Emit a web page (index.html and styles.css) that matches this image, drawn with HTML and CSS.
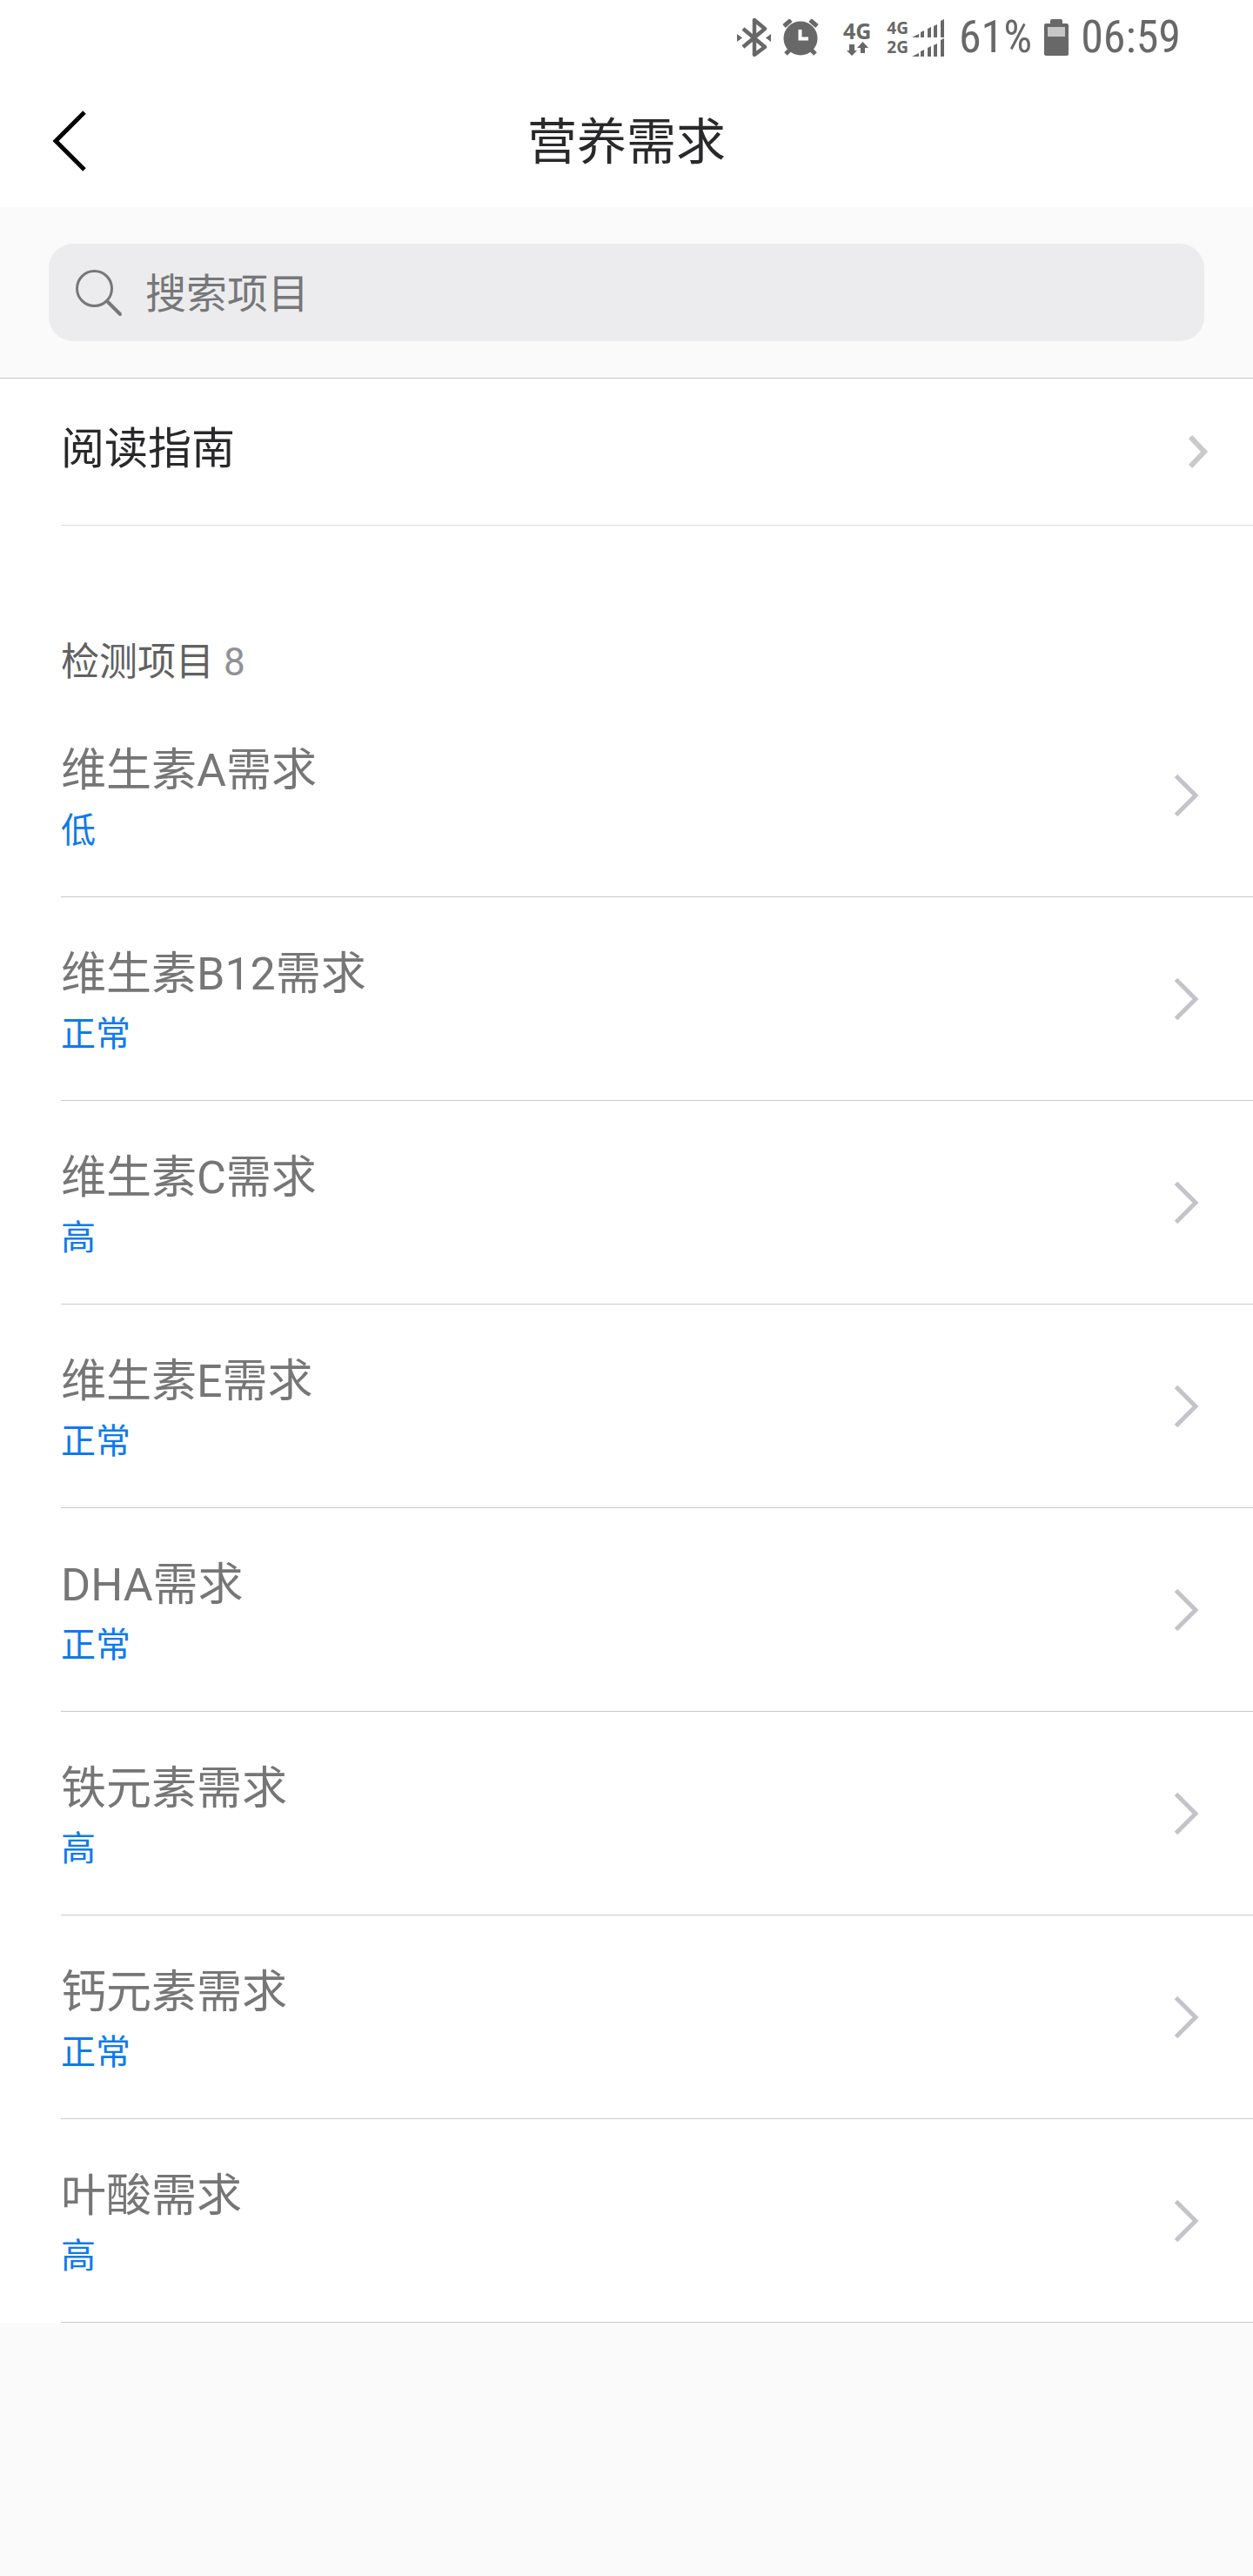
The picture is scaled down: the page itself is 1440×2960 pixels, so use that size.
FILE: index.html
```html
<!DOCTYPE html>
<html lang="zh-CN">
<head>
  <meta charset="UTF-8">
  <meta name="viewport" content="width=device-width, initial-scale=1.0">
  <title>营养需求</title>
  <link rel="stylesheet" href="styles.css">
</head>
<body>
  <!-- Shared icons -->
  <svg class="sprite" aria-hidden="true">
    <symbol id="chevron" viewBox="0 0 30 50">
      <path d="M2.500 2.500L25 25L2.500 47.500" fill="none" stroke="currentColor" stroke-width="5"/>
    </symbol>
    <symbol id="signal" viewBox="0 0 38 21">
      <path d="M0 21L8 17V21ZM10 21V15L14 13V21ZM18 21V11L22 9V21ZM25 21V8L29 6V21ZM33 21V2L37 0V21Z" fill="currentColor"/>
    </symbol>
  </svg>

  <!-- Status bar -->
  <div class="status-bar">
    <svg class="bluetooth" viewBox="0 0 40 44">
      <path d="M7 12L32 33L20 42V2L32 12L7 33" fill="none" stroke="currentColor" stroke-width="4.500" stroke-linejoin="round"/>
      <path d="M0 18L6 22.500L0 27ZM39 18L33 22.500L39 27Z" fill="currentColor"/>
    </svg>
    <svg class="alarm" viewBox="0 0 42 42">
      <circle cx="21" cy="22" r="19.500" fill="currentColor"/>
      <path d="M2 8L10 1M40 8L32 1M4 40L9 35M38 40L33 35" stroke="currentColor" stroke-width="5"/>
      <path d="M20.500 12V22.500H30" fill="none" stroke="#fff" stroke-width="4"/>
    </svg>
    <div class="network">
      <span>4G</span>
      <svg class="arrows" viewBox="0 0 26 16">
        <path d="M4 3H10V10H13L7 16L1 10H4ZM17 13V7H13L19.500 0L26 7H22V13Z" fill="currentColor"/>
      </svg>
    </div>
    <div class="sims">
      <div class="sim"><span>4G</span><svg class="signal"><use href="#signal"/></svg></div>
      <div class="sim"><span>2G</span><svg class="signal"><use href="#signal"/></svg></div>
    </div>
    <span class="percent">61%</span>
    <svg class="battery" viewBox="0 0 28 42">
      <path d="M7 5V2Q7 0 9 0H19Q21 0 21 2V5H26Q28 5 28 7V40Q28 42 26 42H2Q0 42 0 40V7Q0 5 2 5Z" fill="currentColor"/>
      <rect x="4" y="9" width="20" height="11" fill="#c6c6c6"/>
    </svg>
    <span class="clock">06:59</span>
  </div>

  <header class="header">
    <button type="button" class="back-button" aria-label="返回">
      <svg viewBox="0 0 40 72">
        <path d="M37 3L4 36L37 69" fill="none" stroke="currentColor" stroke-width="5"/>
      </svg>
    </button>
    <h1>营养需求</h1>
  </header>

  <form class="search">
    <label class="search-box">
      <svg viewBox="0 0 54 54">
        <circle cx="21.500" cy="21.500" r="20" fill="none" stroke="currentColor" stroke-width="3"/>
        <path d="M36 36L51 51" stroke="currentColor" stroke-width="4" stroke-linecap="round"/>
      </svg>
      <input type="search" placeholder="搜索项目" aria-label="搜索项目">
    </label>
  </form>

  <main class="content">
    <a href="#guide" class="guide">
      <span>阅读指南</span>
      <svg class="guide-chevron" viewBox="0 0 22 38">
        <path d="M2 2L18 19L2 36" fill="none" stroke="currentColor" stroke-width="6"/>
      </svg>
    </a>

    <h2>检测项目 <span class="count">8</span></h2>

    <ul class="items">
      <li><a href="#a" class="item">
        <span class="item-text"><span class="name">维生素A需求</span><span class="level">低</span></span>
        <svg class="chevron"><use href="#chevron"/></svg>
      </a></li>
      <li><a href="#b12" class="item">
        <span class="item-text"><span class="name">维生素B12需求</span><span class="level">正常</span></span>
        <svg class="chevron"><use href="#chevron"/></svg>
      </a></li>
      <li><a href="#c" class="item">
        <span class="item-text"><span class="name">维生素C需求</span><span class="level">高</span></span>
        <svg class="chevron"><use href="#chevron"/></svg>
      </a></li>
      <li><a href="#e" class="item">
        <span class="item-text"><span class="name">维生素E需求</span><span class="level">正常</span></span>
        <svg class="chevron"><use href="#chevron"/></svg>
      </a></li>
      <li><a href="#dha" class="item">
        <span class="item-text"><span class="name">DHA需求</span><span class="level">正常</span></span>
        <svg class="chevron"><use href="#chevron"/></svg>
      </a></li>
      <li><a href="#iron" class="item">
        <span class="item-text"><span class="name">铁元素需求</span><span class="level">高</span></span>
        <svg class="chevron"><use href="#chevron"/></svg>
      </a></li>
      <li><a href="#calcium" class="item">
        <span class="item-text"><span class="name">钙元素需求</span><span class="level">正常</span></span>
        <svg class="chevron"><use href="#chevron"/></svg>
      </a></li>
      <li><a href="#folate" class="item">
        <span class="item-text"><span class="name">叶酸需求</span><span class="level">高</span></span>
        <svg class="chevron"><use href="#chevron"/></svg>
      </a></li>
    </ul>
  </main>
</body>
</html>
```

FILE: styles.css
```css
/* General Styles */
* {
  box-sizing: border-box;
}

body {
  margin: 0;
  min-height: 100vh;
  background-color: #fafafa;
  color: #29292b;
  font-family: Roboto, "Noto Sans CJK SC", sans-serif;
}

svg {
  display: block;
  flex-shrink: 0;
}

a {
  color: inherit;
  text-decoration: none;
}

.sprite {
  display: none;
}

/* Status bar */
.status-bar {
  display: flex;
  align-items: center;
  justify-content: flex-end;
  height: 86px;
  padding-right: 83px;
  background-color: #fff;
  color: #686868;
}

.bluetooth {
  width: 40px;
  height: 44px;
  margin-right: 12px;
}

.alarm {
  width: 42px;
  height: 42px;
  margin-right: 28px;
}

.network {
  display: flex;
  flex-direction: column;
  align-items: center;
  margin-right: 18px;
  font: bold 25px/26px "Noto Sans", sans-serif;
}

.arrows {
  width: 26px;
  height: 16px;
}

.sims {
  margin-right: 16px;
  font: bold 19px/22px "Noto Sans", sans-serif;
}

.sim {
  display: flex;
  align-items: center;
  gap: 4px;
}

.signal {
  width: 38px;
  height: 21px;
}

.percent,
.clock {
  font-family: "Roboto Condensed", "Liberation Sans Narrow", Roboto, sans-serif;
  font-size: 52px;
  line-height: 60px;
}

.battery {
  width: 28px;
  height: 42px;
  margin: 0 14px;
}

/* Header */
.header {
  display: grid;
  grid-template-columns: 160px 1fr 160px;
  align-items: center;
  height: 152px;
  background-color: #fff;
}

.back-button {
  padding: 0 60px;
  border: none;
  background: none;
  color: #000;
  cursor: pointer;
}

.back-button svg {
  width: 40px;
  height: 72px;
}

h1 {
  margin: 0;
  padding-top: 4px;
  font-size: 57px;
  font-weight: 400;
  line-height: 80px;
  text-align: center;
}

/* Search */
.search {
  padding: 42px 56px;
  border-bottom: 1px solid #c8c8c8;
}

.search-box {
  display: flex;
  align-items: center;
  gap: 26px;
  height: 112px;
  padding: 2px 31px 0;
  border-radius: 28px;
  background-color: #ececee;
  color: #777779;
}

.search-box svg {
  width: 54px;
  height: 54px;
}

.search-box input {
  flex: 1;
  min-width: 0;
  padding: 0;
  border: none;
  outline: none;
  background: none;
  color: #29292b;
  font-family: inherit;
  font-size: 47px;
}

.search-box input::placeholder {
  color: #777779;
}

/* Content */
.content {
  background-color: #fff;
}

.guide {
  display: flex;
  align-items: center;
  justify-content: space-between;
  height: 169px;
  margin-left: 70px;
  padding-right: 52px;
  border-bottom: 1px solid #dedede;
  font-size: 50px;
}

.guide span {
  padding-bottom: 16px;
}

.guide-chevron {
  width: 22px;
  height: 38px;
  color: #cacaca;
}

h2 {
  margin: 0;
  padding: 125px 70px 3px;
  color: #616161;
  font-size: 44px;
  font-weight: 400;
  line-height: 65px;
}

.count {
  color: #919196;
}

.items {
  margin: 0;
  padding: 0;
  list-style: none;
}

.item {
  display: flex;
  align-items: center;
  justify-content: space-between;
  height: 234px;
  margin-left: 70px;
  padding-right: 61px;
  border-bottom: 1px solid #cacaca;
}

.item-text {
  display: flex;
  flex-direction: column;
  padding-top: 4px;
}

.name {
  color: #767676;
  font-size: 52px;
  line-height: 78px;
}

.level {
  color: #0f7aec;
  font-size: 40px;
  line-height: 60px;
}

.chevron {
  width: 30px;
  height: 50px;
  color: #c3c3ca;
}
```
